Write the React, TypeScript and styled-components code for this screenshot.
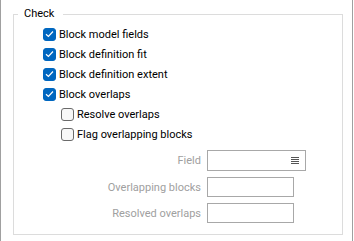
import React from "react";
import styled, { createGlobalStyle } from "styled-components";

const Global = createGlobalStyle`
  html, body { margin: 0; padding: 0; background: #ffffff; }
  body { font-family: Roboto, "Noto Sans", sans-serif; font-size: 11px; color: #000; }
`;

const Panel = styled.div`
  box-sizing: border-box;
  width: 353px;
  height: 241px;
  border-left: 1px solid #a0a0a0;
  border-right: 1px solid #a0a0a0;
  padding: 6px 0 0 12px;
`;

const Group = styled.fieldset`
  box-sizing: border-box;
  width: 330px;
  height: 229px;
  margin: 0;
  padding: 2px 0 0 0;
  border: 1px solid #dcdcdc;
  min-inline-size: 0;
`;

const Legend = styled.legend`
  margin-left: 4px;
  padding: 0 9px 0 6px;
  line-height: 16px;
  font-size: 11px;
`;

const Rows = styled.div`
  display: flex;
  flex-direction: column;
  padding-left: 29px;
`;

const Row = styled.label<{ $indent?: boolean }>`
  display: flex;
  align-items: center;
  height: 20px;
  gap: 3px;
  padding-left: ${(p) => (p.$indent ? "18px" : "0")};
  white-space: nowrap;
`;

const Box = styled.span<{ $checked?: boolean }>`
  box-sizing: border-box;
  width: 13px;
  height: 13px;
  flex: none;
  border-radius: 3px;
  display: flex;
  align-items: center;
  justify-content: center;
  background: ${(p) => (p.$checked ? "#0067c0" : "#f7f7f7")};
  border: 1px solid ${(p) => (p.$checked ? "#0067c0" : "#6a6a6a")};
`;

const Form = styled.div`
  display: grid;
  grid-template-columns: 187px auto;
  column-gap: 6px;
  row-gap: 6px;
  margin-top: 6px;
  align-items: center;
`;

const FieldLabel = styled.span`
  text-align: right;
  color: #a0a0a0;
  white-space: nowrap;
`;

const Input = styled.div<{ $w: number; $h: number }>`
  box-sizing: border-box;
  width: ${(p) => p.$w}px;
  height: ${(p) => p.$h}px;
  border: 1px solid #a8a8a8;
  background: #fff;
  display: flex;
  align-items: center;
  justify-content: flex-end;
  padding-right: 6px;
`;

const Check = () => (
  <svg width="9" height="8" viewBox="0 0 9 8">
    <path d="M1 4.2 L3.4 6.5 L8 1.5" fill="none" stroke="#fff" strokeWidth="1.2" />
  </svg>
);

const ListIcon = () => (
  <svg width="8" height="8" viewBox="0 0 8 8">
    <path d="M0 0.5H8M0 2.5H8M0 4.5H8M0 6.5H8" stroke="#555" strokeWidth="1" />
  </svg>
);

const CheckRow = ({ label, checked, indent }: { label: string; checked?: boolean; indent?: boolean }) => (
  <Row $indent={indent}>
    <Box $checked={checked}>{checked && <Check />}</Box>
    <span>{label}</span>
  </Row>
);

export default function App() {
  return (
    <>
      <Global />
      <Panel>
        <Group>
          <Legend>Check</Legend>
          <Rows>
            <CheckRow label="Block model fields" checked />
            <CheckRow label="Block definition fit" checked />
            <CheckRow label="Block definition extent" checked />
            <CheckRow label="Block overlaps" checked />
            <CheckRow label="Resolve overlaps" indent />
            <CheckRow label="Flag overlapping blocks" indent />
          </Rows>
          <Form>
            <FieldLabel>Field</FieldLabel>
            <Input $w={99} $h={21}>
              <ListIcon />
            </Input>
            <FieldLabel>Overlapping blocks</FieldLabel>
            <Input $w={87} $h={20} />
            <FieldLabel>Resolved overlaps</FieldLabel>
            <Input $w={87} $h={20} />
          </Form>
        </Group>
      </Panel>
    </>
  );
}
